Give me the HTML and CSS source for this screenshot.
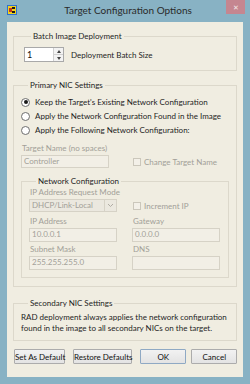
FILE: index.html
```html
<!DOCTYPE html>
<html lang="en">
<head>
  <meta charset="UTF-8">
  <meta name="viewport" content="width=device-width, initial-scale=1.0">
  <title>Target Configuration Options</title>
  <link rel="stylesheet" href="styles.css">
</head>
<body>
  <div class="window">
    <div class="titlebar">
      <svg class="app-icon" width="10" height="10" viewBox="0 0 10 10">
        <rect x="0.5" y="0.5" width="9" height="9" fill="#f2d21b" stroke="#2f6fd0"/>
        <rect x="2" y="3" width="3" height="4" fill="#c8321e"/>
        <rect x="5" y="2" width="3" height="2" fill="#1a1a1a"/>
        <rect x="5" y="6" width="3" height="2" fill="#1a1a1a"/>
      </svg>
      <div class="title">Target Configuration Options</div>
      <div class="close">&#x2715;</div>
    </div>

    <div class="client">
      <fieldset class="group batch">
        <legend>Batch Image Deployment</legend>
        <div class="batch-row">
          <div class="spinner">
            <span class="spin-value">1</span>
            <span class="spin-btns">
              <span class="spin-up"></span>
              <span class="spin-down"></span>
            </span>
          </div>
          <span class="batch-label">Deployment Batch Size</span>
        </div>
      </fieldset>

      <fieldset class="group primary">
        <legend>Primary NIC Settings</legend>
        <div class="radio-row"><span class="radio checked"></span>Keep the Target's Existing Network Configuration</div>
        <div class="radio-row"><span class="radio"></span>Apply the Network Configuration Found in the Image</div>
        <div class="radio-row"><span class="radio"></span>Apply the Following Network Configuration:</div>

        <div class="dim-label name-label">Target Name (no spaces)</div>
        <div class="name-row">
          <div class="textbox name-box">Controller</div>
          <div class="check-row"><span class="checkbox"></span>Change Target Name</div>
        </div>

        <fieldset class="group network">
          <legend>Network Configuration</legend>
          <div class="dim-label">IP Address Request Mode</div>
          <div class="mode-row">
            <div class="select">
              <span class="select-value">DHCP/Link-Local</span>
              <span class="select-arrow">
                <svg width="7" height="5" viewBox="0 0 7 5"><path d="M1 1 L3.5 3.5 L6 1" fill="none" stroke="#b0aca4" stroke-width="1"/></svg>
              </span>
            </div>
            <div class="check-row"><span class="checkbox"></span>Increment IP</div>
          </div>
          <div class="addr-grid">
            <div class="dim-label">IP Address</div>
            <div class="dim-label">Gateway</div>
            <div class="textbox">10.0.0.1</div>
            <div class="textbox">0.0.0.0</div>
            <div class="dim-label">Subnet Mask</div>
            <div class="dim-label">DNS</div>
            <div class="textbox">255.255.255.0</div>
            <div class="textbox"></div>
          </div>
        </fieldset>
      </fieldset>

      <fieldset class="group secondary">
        <legend>Secondary NIC Settings</legend>
        <p class="note">RAD deployment always applies the network configuration<br>found in the image to all secondary NICs on the target.</p>
      </fieldset>

      <div class="buttons">
        <button class="btn btn-default-set">Set As Default</button>
        <button class="btn btn-restore">Restore Defaults</button>
        <button class="btn btn-ok">OK</button>
        <button class="btn btn-cancel">Cancel</button>
      </div>
    </div>
  </div>
</body>
</html>
```

FILE: styles.css
```css
body {
  margin: 0;
  background-color: #88b2c4;
  font-family: "Lato", "Liberation Sans", sans-serif;
  font-size: 8px;
  color: #222;
  white-space: nowrap;
}

.window {
  width: 250px;
  height: 384px;
  box-sizing: border-box;
  padding: 0 7px 7px 7px;
  background-color: #88b2c4;
  display: flex;
  flex-direction: column;
}

.titlebar {
  height: 22px;
  display: flex;
  align-items: flex-start;
  position: relative;
}

.app-icon {
  margin-top: 5px;
  margin-left: 0;
}

.title {
  flex: 1;
  text-align: center;
  font-size: 10px;
  line-height: 20px;
  color: #2a2a2a;
  padding-right: 4px;
}

.close {
  position: absolute;
  right: -2px;
  top: 0;
  width: 19px;
  height: 14px;
  background-color: #c58690;
  color: #f3e6e8;
  font-size: 7px;
  line-height: 14px;
  text-align: center;
}

.client {
  flex: 1;
  min-height: 0;
  background-color: #f0ede1;
  padding: 9px 6px 0 6px;
  display: flex;
  flex-direction: column;
}

.group {
  margin: 0;
  border: 1px solid #dcd8cb;
  padding: 0;
  min-width: 0;
}

.group legend {
  margin-left: 7px;
  padding: 0 2px;
  line-height: 10px;
  color: #1e1e1e;
}

/* batch */
.batch {
  padding: 6px 10px 8px 10px;
}

.batch-row {
  display: flex;
  align-items: center;
}

.spinner {
  width: 40px;
  height: 15px;
  box-sizing: border-box;
  background-color: #fff;
  border: 1px solid #a9a9a9;
  display: flex;
  align-items: center;
  justify-content: space-between;
}

.spin-value {
  padding-left: 2px;
  font-size: 9px;
  color: #111;
}

.spin-btns {
  width: 9px;
  height: 13px;
  border-left: 1px solid #d0d0d0;
  display: flex;
  flex-direction: column;
  background-color: #f3f3f3;
}

.spin-up,
.spin-down {
  flex: 1;
  display: flex;
  align-items: center;
  justify-content: center;
}

.spin-up {
  border-bottom: 1px solid #d0d0d0;
}

.spin-up::after {
  content: "";
  border-left: 2px solid transparent;
  border-right: 2px solid transparent;
  border-bottom: 3px solid #444;
}

.spin-down::after {
  content: "";
  border-left: 2px solid transparent;
  border-right: 2px solid transparent;
  border-top: 3px solid #444;
}

.batch-label {
  margin-left: 7px;
  color: #1e1e1e;
}

/* primary */
.primary {
  margin-top: 9px;
  padding: 5px 7px 8px 7px;
}

.radio-row {
  height: 14px;
  display: flex;
  align-items: center;
  color: #1e1e1e;
}

.radio {
  width: 9px;
  height: 9px;
  box-sizing: border-box;
  border: 1px solid #6e6e6e;
  border-radius: 50%;
  background-color: #fff;
  margin-right: 5px;
  display: flex;
  align-items: center;
  justify-content: center;
}

.radio.checked::after {
  content: "";
  width: 4px;
  height: 4px;
  border-radius: 50%;
  background-color: #1a1a1a;
}

.dim-label {
  color: #a29f98;
  line-height: 10px;
  padding-left: 1px;
}

.name-label {
  margin-top: 6px;
}

.name-row,
.mode-row {
  margin-top: 2px;
  display: flex;
  align-items: center;
}

.textbox {
  width: 88px;
  height: 13px;
  box-sizing: border-box;
  border: 1px solid #d6d2c6;
  background-color: #f2efe6;
  color: #a29f98;
  line-height: 11px;
  padding-left: 2px;
}

.check-row {
  display: flex;
  align-items: center;
  color: #a29f98;
}

.name-row .check-row {
  margin-left: 24px;
}

.mode-row .check-row {
  margin-left: 16px;
}

.checkbox {
  width: 8px;
  height: 8px;
  box-sizing: border-box;
  border: 1px solid #cbc7bb;
  background-color: #f3f0e8;
  margin-right: 3px;
}

/* network */
.network {
  margin-top: 8px;
  padding: 1px 7px 7px 7px;
}

.select {
  width: 88px;
  height: 13px;
  box-sizing: border-box;
  border: 1px solid #d6d2c6;
  background-color: #ebe8df;
  display: flex;
}

.select-value {
  flex: 1;
  color: #a29f98;
  line-height: 11px;
  padding-left: 2px;
}

.select-arrow {
  width: 11px;
  border-left: 1px solid #d6d2c6;
  display: flex;
  align-items: center;
  justify-content: center;
}

.addr-grid {
  margin-top: 4px;
  display: grid;
  grid-template-columns: 88px 88px;
  column-gap: 15px;
  row-gap: 2px;
}

.addr-grid .textbox {
  height: 14px;
}

/* secondary */
.secondary {
  margin-top: 11px;
  padding: 4px 7px 6px 7px;
}

.note {
  margin: 0;
  line-height: 11px;
  color: #1e1e1e;
}

/* buttons */
.buttons {
  margin-top: 8px;
  display: flex;
  padding-left: 1px;
}

.btn {
  height: 15px;
  padding: 0;
  font-family: inherit;
  font-size: 8px;
  color: #111;
  border: 1px solid #acacac;
  background: linear-gradient(#f2f2f2, #e3e3e3);
  border-radius: 1px;
  white-space: nowrap;
}

.btn-default-set {
  width: 51px;
}

.btn-restore {
  width: 59px;
  margin-left: 8px;
}

.btn-ok {
  width: 48px;
  margin-left: 8px;
  border-color: #8fa9c4;
}

.btn-cancel {
  width: 47px;
  margin-left: 5px;
}
```
